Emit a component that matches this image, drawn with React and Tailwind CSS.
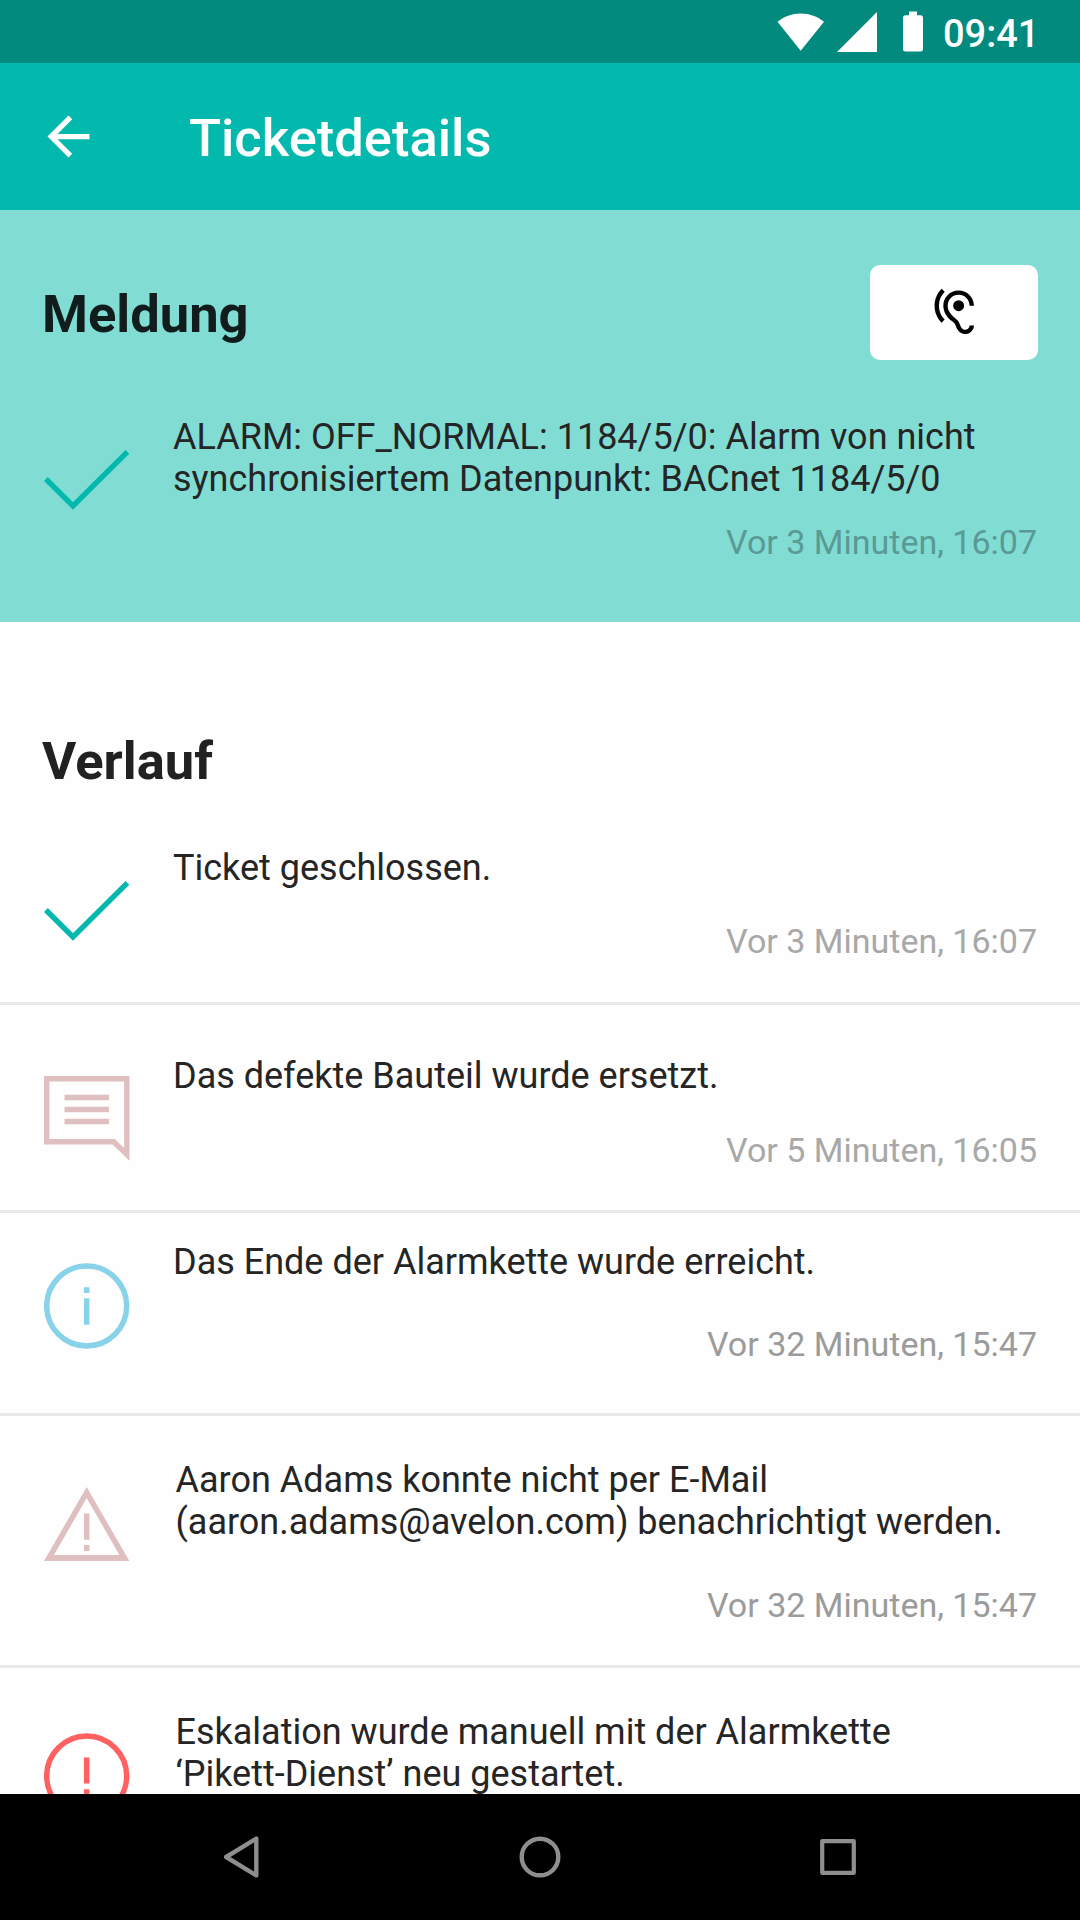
import React from 'react';
import { MdArrowBack, MdHearing } from 'react-icons/md';

const CheckIcon = () => (
  <svg className="w-[86px] h-[60px]" viewBox="0 0 86 60" fill="none" stroke="#03b9ad" strokeWidth="5.4">
    <path d="M1.9 29L29 56L83.4 1.9" />
  </svg>
);

const CommentIcon = () => (
  <svg className="w-[86px] h-[85px]" viewBox="0 0 86 85" fill="none" stroke="#e0bfc1" strokeWidth="5.4">
    <path d="M2.7 2.7H82.8V78.4L69.7 65.7H2.7Z" strokeMiterlimit="10" />
    <path d="M20.5 21.5H65M20.5 33.5H65M20.5 45.5H65" />
  </svg>
);

const InfoIcon = () => (
  <svg className="w-[86px] h-[86px]" viewBox="0 0 86 86" fill="none" stroke="#89d3ea" strokeWidth="5.5">
    <circle cx="42.7" cy="43" r="40" />
    <path d="M42.7 24.3V30M42.7 35.3V61.7" />
  </svg>
);

const WarningIcon = () => (
  <svg className="w-[86px] h-[74px]" viewBox="0 0 86 74" fill="#e0bfc1">
    <path fillRule="evenodd" d="M42.7 0L85.4 74H0ZM42.7 11L10 68H75.4Z" />
    <path d="M40 26.5H45.4V52.7H40ZM40 58H45.4V64H40Z" />
  </svg>
);

const AlertIcon = () => (
  <svg className="w-[86px] h-[86px]" viewBox="0 0 86 86" fill="none" stroke="#ff6161" strokeWidth="5.5">
    <circle cx="42.7" cy="43" r="40" />
    <path d="M42.7 24.5V50.5M42.7 56.2V62" />
  </svg>
);

const history = [
  {
    icon: <CheckIcon />,
    lines: ['Ticket geschlossen.'],
    time: 'Vor 3 Minuten, 16:07',
    row: 'h-[205px]',
    iconTop: 'pt-[81px]',
    textTop: 'pt-[47px] pl-[43px]',
    timeStyle: 'mt-[31px] text-[#a8a8a8]',
  },
  {
    icon: <CommentIcon />,
    lines: ['Das defekte Bauteil wurde ersetzt.'],
    time: 'Vor 5 Minuten, 16:05',
    row: 'h-[208px]',
    iconTop: 'pt-[71px]',
    textTop: 'pt-[50px] pl-[43px]',
    timeStyle: 'mt-[32px] text-[#a8a8a8]',
  },
  {
    icon: <InfoIcon />,
    lines: ['Das Ende der Alarmkette wurde erreicht.'],
    time: 'Vor 32 Minuten, 15:47',
    row: 'h-[203px]',
    iconTop: 'pt-[50px]',
    textTop: 'pt-[28px] pl-[43px]',
    timeStyle: 'mt-[40px] text-[#9b9b9b]',
  },
  {
    icon: <WarningIcon />,
    lines: ['Aaron Adams konnte nicht per E-Mail', '(aaron.adams@avelon.com) benachrichtigt werden.'],
    time: 'Vor 32 Minuten, 15:47',
    row: 'h-[252px]',
    iconTop: 'pt-[71px]',
    textTop: 'pt-[43px] pl-[45.5px]',
    timeStyle: 'mt-[41px] text-[#9b9b9b]',
  },
  {
    icon: <AlertIcon />,
    lines: ['Eskalation wurde manuell mit der Alarmkette', '‘Pikett-Dienst’ neu gestartet.'],
    row: 'h-[252px]',
    iconTop: 'pt-[65px]',
    textTop: 'pt-[43px] pl-[45.5px]',
  },
];

const StatusBar = () => (
  <div className="h-[63px] shrink-0 bg-[#028a7e] flex items-center justify-end pr-[42px] text-white">
    <svg className="w-[47px] h-[38px]" viewBox="0 0 47 38" fill="currentColor">
      <path d="M0.5 8.8C7 3.5 15 0.5 23.7 0.5S40.5 3.5 47 8.8L23.7 37.8Z" />
    </svg>
    <svg className="w-[40px] h-[40px] ml-[13px]" viewBox="0 0 40 40" fill="currentColor">
      <path d="M0 40H40V0Z" />
    </svg>
    <svg className="w-[20px] h-[41px] ml-[26px]" viewBox="0 0 20 41" fill="currentColor">
      <path d="M6 0.5H14V4.3H17.5Q20 4.3 20 6.8V38Q20 40.5 17.5 40.5H2.5Q0 40.5 0 38V6.8Q0 4.3 2.5 4.3H6Z" />
    </svg>
    <span className="ml-[20px] mt-[4px] w-[95px] text-[38px]/[44px] font-medium">09:41</span>
  </div>
);

const Header = () => (
  <header className="h-[147px] shrink-0 bg-[#03b9ad] flex items-center pl-[37px] text-white">
    <MdArrowBack className="w-[63px] h-[63px]" />
    <h1 className="ml-[89px] mt-[2px] text-[52.5px]/[62px] font-medium">Ticketdetails</h1>
  </header>
);

const Message = () => (
  <section className="h-[412px] shrink-0 bg-[#81dcd4] pl-[42px] pr-[43px] pt-[55px]">
    <div className="flex justify-between">
      <h2 className="mt-[18px] text-[52.5px]/[62px] font-bold text-[#111d1c]">Meldung</h2>
      <button className="-mr-px w-[168px] h-[95px] rounded-[10px] bg-white text-black flex items-center justify-center">
        <MdHearing className="w-[52.5px] h-[52.5px]" />
      </button>
    </div>
    <div className="flex pl-[2px] pt-[56px]">
      <div className="w-[86px] shrink-0 pt-[34px]">
        <CheckIcon />
      </div>
      <div className="flex-1 pl-[43px]">
        <p className="text-[36px]/[42px] text-[#252525]">
          ALARM: OFF_NORMAL: 1184/5/0: Alarm von nicht
          <br />
          synchronisiertem Datenpunkt: BACnet 1184/5/0
        </p>
        <p className="mt-[21px] text-right text-[34px]/[42px] text-[#5a9a94]">Vor 3 Minuten, 16:07</p>
      </div>
    </div>
  </section>
);

const HistoryItem = ({ item }) => (
  <li className={`flex shrink-0 border-b-[3px] border-[#e8e8e8] pl-[44px] pr-[43px] ${item.row}`}>
    <div className={`w-[86px] shrink-0 ${item.iconTop}`}>{item.icon}</div>
    <div className={`flex-1 ${item.textTop}`}>
      {item.lines.map((line) => (
        <p key={line} className="text-[36px]/[42px] text-[#252525]">{line}</p>
      ))}
      {item.time && <p className={`text-right text-[34px]/[42px] ${item.timeStyle}`}>{item.time}</p>}
    </div>
  </li>
);

const NavBar = () => (
  <nav className="h-[126px] shrink-0 bg-black flex items-center justify-between px-[224px] text-[#8e8e8e]">
    <svg className="w-[36px] h-[42px]" viewBox="0 0 36 42" fill="none" stroke="currentColor" strokeWidth="4.4" strokeLinejoin="round">
      <path d="M2.2 21L32.3 2.6V39.4Z" />
    </svg>
    <svg className="w-[42px] h-[42px]" viewBox="0 0 42 42" fill="none" stroke="currentColor" strokeWidth="4.4">
      <circle cx="21" cy="21" r="18.3" />
    </svg>
    <svg className="w-[36px] h-[36px]" viewBox="0 0 36 36" fill="none" stroke="currentColor" strokeWidth="4.2" strokeLinejoin="round">
      <path d="M2.2 2.2H33.8V33.8H2.2Z" />
    </svg>
  </nav>
);

export default function App() {
  return (
    <div className="w-[1080px] h-[1920px] flex flex-col overflow-hidden bg-[#fefefe] font-['Roboto',sans-serif]">
      <StatusBar />
      <Header />
      <main className="flex-1 min-h-0 overflow-hidden flex flex-col">
        <Message />
        <section className="pt-[108px]">
          <h2 className="h-[70px] pl-[42px] text-[52.5px]/[62px] font-bold text-[#212121]">Verlauf</h2>
          <ul className="flex flex-col">
            {history.map((item) => (
              <HistoryItem key={item.lines[0]} item={item} />
            ))}
          </ul>
        </section>
      </main>
      <NavBar />
    </div>
  );
}
